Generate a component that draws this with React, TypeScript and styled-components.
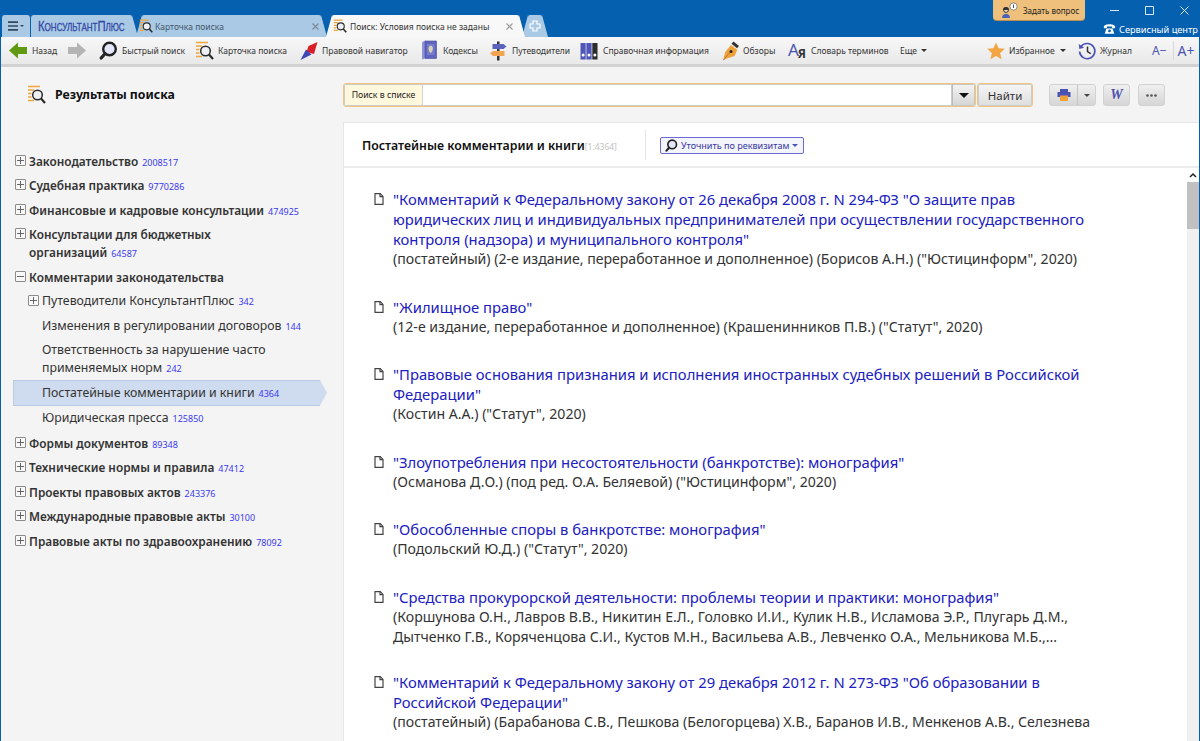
import React from "react";
import styled, { createGlobalStyle } from "styled-components";

const Global = createGlobalStyle`
  html, body { margin: 0; padding: 0; background: #0560b0; overflow: hidden; }
  #root { width: 1200px; height: 741px; }
  * { box-sizing: border-box; }
`;

const UI = `"Noto Sans", "Open Sans", sans-serif`;

const Page = styled.div`
  width: 1200px; height: 741px; display: flex; flex-direction: column;
  background: #0560b0; font-family: ${UI}; overflow: hidden;
  padding: 0 1px;
`;
const TitleBar = styled.div`
  height: 37px; display: flex; flex: none;
`;
const Tabs = styled.div`
  display: flex; align-items: flex-end; padding-left: 1px;
`;
const TabShape = styled.div<{ $w: number; $active?: boolean; $ml?: number; $plain?: boolean; $noLeft?: boolean }>`
  width: ${p => p.$w}px; margin-left: ${p => p.$ml ?? 0}px; height: 22px; flex: none; position: relative;
  display: flex; align-items: center; z-index: ${p => p.$active ? 2 : 1};
  background: ${p => p.$active ? "#f8f8f8" : "#a9c9e4"};
  border-radius: ${p => p.$plain ? "3px 3px 0 0" : p.$noLeft ? "3px 2px 0 0" : "2px 2px 0 0"};
  font-size: 8.5px;
  &::before, &::after {
    content: ""; position: absolute; top: 0; bottom: 0; width: 6px; background: inherit;
    display: ${p => p.$plain ? "none" : "block"};
  }
  &::before { right: 100%; clip-path: polygon(100% 0, 100% 100%, 0 100%); ${p => p.$noLeft ? "display: none;" : ""} }
  &::after { left: 100%; clip-path: polygon(0 0, 100% 100%, 0 100%); }
`;
const MenuInner = styled.div`
  flex: 1; display: flex; align-items: center; justify-content: center; gap: 1px;
`;
const LogoText = styled.span`
  display: inline-block; margin-left: 7px; transform: scaleX(0.73); transform-origin: left center;
  font-family: "Liberation Sans", sans-serif; font-size: 15.5px; font-variant: small-caps; color: #3448a6;
  -webkit-text-stroke: 0.3px #3448a6; white-space: nowrap; line-height: 1;
`;
const TabIconWrap = styled.span<{ $ml: number }>`
  display: flex; margin-left: ${p => p.$ml}px; position: relative; z-index: 1; flex: none;
`;
const TabLabel = styled.span<{ $active?: boolean; $pl: number }>`
  flex: 1; white-space: nowrap; color: ${p => p.$active ? "#333" : "#44586c"};
  padding-left: ${p => p.$pl}px;
`;
const TabClose = styled.span<{ $mr: number }>`
  display: flex; margin-right: ${p => p.$mr}px; flex: none;
`;
const PlusGlyph = styled.span`
  flex: 1; display: flex; justify-content: center; position: relative; z-index: 1;
`;
const RightControls = styled.div`
  margin-left: auto; display: flex; align-items: flex-start;
`;
const AskBtn = styled.div`
  width: 92px; height: 21px; flex: none;
  background: #eec07c; border-radius: 0 0 4px 4px; border-bottom: 1px solid #b98f50;
  display: flex; align-items: center; gap: 5px; padding-left: 8px;
  font-size: 8px; color: #222; white-space: nowrap;
`;
const WinColumn = styled.div`
  width: 114px; flex: none; display: flex; flex-direction: column; height: 37px;
`;
const WinButtons = styled.div`
  height: 21px; display: flex; gap: 26px; align-items: center; padding-left: 25px;
`;
const ServiceCenter = styled.div`
  display: flex; gap: 3px; align-items: center; padding-left: 18px;
  color: #fff; font-size: 9.2px; white-space: nowrap; height: 16px;
`;

const Toolbar = styled.div`
  height: 30px; flex: none; display: flex; align-items: center; padding-left: 8px;
  background: linear-gradient(#f7f7f7, #e9e9e9); border-bottom: 3px solid #d2d2d2;
`;
const ToolItem = styled.div<{ $w: number; $gap?: number }>`
  display: flex; align-items: center; gap: ${p => p.$gap ?? 4}px; width: ${p => p.$w}px;
  font-size: 8.5px; color: #333; white-space: nowrap; flex: none;
`;
const Caret = styled.span<{ $c?: string; $s?: number; $ml?: number }>`
  display: inline-block; width: 0; height: 0; margin-left: ${p => p.$ml ?? 4}px; flex: none;
  border-left: ${p => p.$s ?? 3.5}px solid transparent; border-right: ${p => p.$s ?? 3.5}px solid transparent;
  border-top: ${p => p.$s ?? 3.5}px solid ${p => p.$c ?? "#333"};
`;
const AyaIcon = styled.span`
  display: flex; align-items: flex-end; width: 20px; height: 20px; flex: none; line-height: 1; position: relative;
`;
const AyaBig = styled.span`
  font-size: 17px; color: #4a55b0; margin-bottom: 3px;
`;
const AyaSmall = styled.span`
  font-size: 12px; font-weight: 700; color: #333; margin-left: -1px; margin-bottom: 1px;
`;
const FontBtn = styled.span<{ $size: number; $ml: number }>`
  font-size: ${p => p.$size}px; color: #4a55b0; margin-left: ${p => p.$ml}px; line-height: 1; flex: none;
`;
const FontDivider = styled.span`
  width: 1px; height: 19px; background: #d8d8d8; margin-left: 6px; flex: none;
`;

const Main = styled.div`
  flex: 1; display: flex; min-height: 0; background: #f4f4f4;
`;
const Sidebar = styled.aside`
  width: 342px; flex: none; display: flex; flex-direction: column; padding-left: 12px;
`;
const SideHead = styled.div`
  height: 54px; display: flex; align-items: center; padding-left: 14px; gap: 9px; flex: none;
`;
const SideTitle = styled.div`
  font-size: 12.3px; font-weight: 700; color: #111;
`;
const Tree = styled.div`
  padding-top: 27px; display: flex; flex-direction: column;
`;
const TreeRow = styled.div<{ $level?: boolean; $selected?: boolean }>`
  position: relative; display: flex; align-items: flex-start; min-height: 24.5px;
  padding: 3.5px 0 3px ${p => p.$level ? 29 : 2}px;
  ${p => p.$selected ? `
    width: 307px; background: #cfdbee; border: 1px solid #bccbe4; border-right: none; padding-top: 2.5px; padding-left: 28px;
    &::after { content: ""; position: absolute; right: -7px; top: -1px; bottom: -1px; width: 7px;
      background: #cfdbee; clip-path: polygon(0 0, 100% 50%, 0 100%); }
  ` : ""}
`;
const Expander = styled.span<{ $level?: boolean }>`
  width: 11px; height: 11px; flex: none; border: 1px solid #8c8c8c; border-radius: 1px;
  margin: 3px 3px 0 ${p => p.$level ? -14 : 0}px; position: relative; background: #f8f8f8;
`;
const ExpanderH = styled.span`
  position: absolute; left: 1px; right: 1px; top: 4px; height: 1px; background: #666;
`;
const ExpanderV = styled.span`
  position: absolute; top: 1px; bottom: 1px; left: 4px; width: 1px; background: #666;
`;
const TreeText = styled.div<{ $bold?: boolean }>`
  font-size: ${p => p.$bold ? 11.85 : 12.3}px; line-height: 18px; font-weight: ${p => p.$bold ? 600 : 400}; color: #333;
  white-space: pre-line;
`;
const Count = styled.span`
  font-size: 9px; font-weight: 400; color: #3a3af0; margin-left: 4px; white-space: nowrap; line-height: 1;
`;

const Right = styled.div`
  flex: 1; min-width: 0; display: flex; flex-direction: column;
`;
const SearchRow = styled.div`
  height: 55px; flex: none; display: flex; align-items: center; padding-top: 1px;
`;
const SearchBox = styled.div`
  width: 633px; height: 24px; display: flex; border: 1px solid #f2c57d; border-radius: 3px; background: #fff; overflow: hidden; flex: none;
`;
const SearchLabel = styled.div`
  width: 79px; flex: none; background: #fff8dc; border: 1px solid #ccc; border-right-color: #d4d4d4; font-size: 8.7px; color: #222;
  display: flex; align-items: center; justify-content: center; white-space: nowrap;
`;
const SearchInput = styled.div`
  flex: 1; border: 1px solid #ccc; border-left: none; background: #fff;
`;
const Drop = styled.div`
  width: 23px; flex: none; background: linear-gradient(#f3f3f3,#d6d6d6); border: 1px solid #c6c6c6; border-left-color: #bbb;
  display: flex; align-items: center; justify-content: center;
`;
const FindBtn = styled.div`
  width: 56px; height: 24px; flex: none; margin-left: 1px; background: linear-gradient(#f6f6f6,#dedede); border: 1px solid #f2c57d; border-radius: 3px; box-shadow: inset 0 0 0 1px #ccc;
  font-size: 11.5px; color: #333; display: flex; align-items: center; justify-content: center;
`;
const ActionBtn = styled.div<{ $w: number; $ml: number }>`
  width: ${p => p.$w}px; margin-left: ${p => p.$ml}px; height: 22px; flex: none; display: flex; align-items: center; justify-content: center;
  background: linear-gradient(#efefef,#d6d6d6); border: 1px solid #d2d2d2; border-radius: 3px;
`;
const ActionSplit = styled.div<{ $w: number }>`
  width: ${p => p.$w}px; height: 100%; display: flex; align-items: center; justify-content: center;
  & + & { border-left: 1px solid #c4c4c4; }
`;
const WordW = styled.span`
  font-family: "Liberation Serif", serif; font-weight: 700; font-style: italic; font-size: 14px; color: #4b4fb0;
`;

const Panel = styled.div`
  flex: 1; min-height: 0; background: #fff; border-left: 1px solid #e6e6e6; border-top: 1px solid #e6e6e6; display: flex; flex-direction: column;
`;
const PanelHead = styled.div`
  height: 45px; flex: none; display: flex; align-items: center; border-bottom: 2px solid #ececec; padding: 1px 0 0 18px;
`;
const PanelTitle = styled.div`
  width: 283px; font-size: 12.3px; font-weight: 600; color: #111; white-space: nowrap; flex: none;
`;
const PanelCount = styled.span`
  font-size: 8.5px; font-weight: 400; color: #c2c2c2;
`;
const HeadDivider = styled.div`
  width: 1px; height: 30px; background: #e4e4e4; flex: none;
`;
const RefineBtn = styled.div`
  margin-left: 14px; height: 17px; width: 144px; flex: none; display: flex; align-items: center; gap: 3px; padding-left: 4px;
  border: 1px solid #6a6ad2; border-radius: 2px; background: #f4f4fb; color: #3636a0; font-size: 9.05px; white-space: nowrap;
`;
const ListWrap = styled.div`
  flex: 1; min-height: 0; display: flex;
`;
const List = styled.div`
  flex: 1; min-width: 0; padding: 21px 0 0 30px; display: flex; flex-direction: column; gap: 27.5px; overflow: hidden;
`;
const Doc = styled.div`
  display: flex; gap: 9px;
  &:last-child { margin-top: -2px; }
`;
const DocIconWrap = styled.span`
  flex: none; padding-top: 4px; display: flex;
`;
const DocBody = styled.div`
  line-height: 20px; white-space: nowrap;
`;
const DocTitle = styled.div`
  color: #2020c0; font-size: 14.8px;
`;
const DocMeta = styled.div`
  color: #333; font-size: 14.1px;
`;
const ScrollTrack = styled.div`
  width: 12px; flex: none; background: #f0f0f0; display: flex; flex-direction: column;
`;
const ScrollUp = styled.div`
  height: 14px; flex: none; display: flex; align-items: center; justify-content: center; background: #fff;
`;
const ScrollThumb = styled.div`
  height: 47px; background: #c0c0c0; flex: none;
`;

const MagnifierIcon = ({ size = 19 }: { size?: number }) => (
  <svg width={size} height={size} viewBox="0 0 19 19">
    <circle cx="10.500" cy="8" r="6.300" fill="#e4e6fb" stroke="#222" strokeWidth="2.400" />
    <path d="M6 12.800 L2.200 17" stroke="#222" strokeWidth="3.200" strokeLinecap="round" />
  </svg>
);
const CardIcon = ({ size = 19 }: { size?: number }) => (
  <svg width={size} height={size} viewBox="0 0 19 19">
    <path d="M1 1.500h12M1 5h6M1 8.500h3.500M1 12h3.500M1 15.500h6" stroke="#f0a63c" strokeWidth="1.700" />
    <circle cx="10.500" cy="10" r="4.800" fill="#eef0f6" stroke="#2b2b2b" strokeWidth="1.500" />
    <path d="M14 13.500l4 4.500" stroke="#2b2b2b" strokeWidth="2.200" />
  </svg>
);
const NavIcon = () => (
  <svg width="18" height="20" viewBox="0 0 18 20">
    <path d="M17.500 1 L8.500 5 L6.500 11 L14 13 Z" fill="#d81f26" />
    <path d="M6 8.500 L0.500 19 L11.500 13.500 Z" fill="#3c48b5" />
  </svg>
);
const CodexIcon = () => (
  <svg width="16" height="21" viewBox="0 0 16 21">
    <path d="M1 2l4-1.500V18l-4 1.500z" fill="#8f93d6" />
    <rect x="4" y="1" width="11.500" height="17.500" fill="#5f63bd" stroke="#474b9f" strokeWidth=".6" />
    <rect x="6" y="4" width="7.500" height="11" fill="#777bcc" />
    <path d="M9.700 5.500c2 .5 2.500 2.800 1.800 5-.5 1.300-1 1.700-1.800 2.500-.8-.8-1.400-1.200-1.800-2.500-.7-2.200-.2-4.500 1.800-5z" fill="#d8d2b4" />
  </svg>
);
const GuideIcon = () => (
  <svg width="17" height="20" viewBox="0 0 17 20">
    <rect x="7" y="0.500" width="2.500" height="19" fill="#333" />
    <path d="M2.500 3h11l3 2.500-3 2.500h-11z" fill="#5a62bd" />
    <path d="M14.500 10H3l-3 2.500L3 15h11.500z" fill="#f3a450" />
  </svg>
);
const BindersIcon = () => (
  <svg width="18" height="20" viewBox="0 0 18 20">
    <rect x="0.500" y="2" width="5.200" height="16.500" fill="#4f56b8" />
    <rect x="6.400" y="2" width="5.200" height="16.500" fill="#4f56b8" />
    <rect x="12.300" y="2" width="5.200" height="16.500" fill="#2d2d2d" />
    <circle cx="3.100" cy="14" r="1.500" fill="#fff" /><circle cx="9" cy="14" r="1.500" fill="#fff" /><circle cx="14.900" cy="14" r="1.500" fill="#fff" />
  </svg>
);
const PenIcon = () => (
  <svg width="18" height="20" viewBox="0 0 18 20">
    <path d="M11.500 .500l5.500 4.500-2 2.300-5.500-4.500z" fill="#333" />
    <path d="M9 4l6.300 4.800-2.700 6.200-8 2.500L1 19.500 3.200 11z" fill="#f0a23a" />
    <circle cx="9" cy="10.500" r="1.500" fill="#222" />
    <path d="M1.500 19l6.500-7.800" stroke="#a06b20" strokeWidth=".7" />
  </svg>
);
const StarIcon = () => (
  <svg width="18" height="18" viewBox="0 0 24 24"><path d="M12 .5l3.500 7.800 8.300.8-6.300 5.600 1.900 8.300L12 18.700 4.600 23l1.900-8.300L.2 9.100l8.300-.8z" fill="#f3a544" /></svg>
);
const HistoryIcon = () => (
  <svg width="18" height="18" viewBox="0 0 18 18">
    <path d="M3.300 4.300A7.600 7.600 0 1 1 1.600 9.500" fill="none" stroke="#4a52b6" strokeWidth="1.700" />
    <path d="M.8 2l.5 5 4.800-1.200z" fill="#4a52b6" />
    <path d="M9.500 4.500V9.700l3.200 2" fill="none" stroke="#333" strokeWidth="1.500" />
  </svg>
);
const ArrowIcon = ({ dir, color }: { dir: "l" | "r"; color: string }) => (
  <svg width="18" height="17" viewBox="0 0 18 17">
    <path d={dir === "l" ? "M0 8.500 L9 .5 V5 H18 V12 H9 V16.500 Z" : "M18 8.500 L9 .5 V5 H0 V12 H9 V16.500 Z"} fill={color} />
  </svg>
);
const HamburgerIcon = () => (
  <svg width="10" height="10" viewBox="0 0 10 10"><path d="M0 1.200h10M0 5h10M0 8.800h10" stroke="#34495e" strokeWidth="1.700" /></svg>
);
const PersonIcon = () => (
  <svg width="17" height="17" viewBox="0 0 17 17">
    <circle cx="5" cy="8" r="2.400" fill="#f6e3c4" stroke="#333" strokeWidth="1" />
    <path d="M2 8a3 3 0 0 1 6 0" fill="#333" />
    <path d="M1 16c0-3 2-4 3-4h2c1 0 3 1 3 4z" fill="#4a62b8" />
    <circle cx="12.500" cy="4.500" r="3.600" fill="#fff" stroke="#777" strokeWidth=".8" />
    <rect x="12" y="2.500" width="1" height="3.500" fill="#555" />
  </svg>
);
const PhoneIcon = () => (
  <svg width="13" height="12" viewBox="0 0 15 13">
    <path d="M1 4c0-4 13-4 13 0v1.500h-3.500V3.500h-6V5.500H1z" fill="#fff" />
    <path d="M4 6h7l2 6H2z" fill="#fff" />
    <circle cx="7.500" cy="8.700" r="1.600" fill="#0560b0" />
  </svg>
);
const PrintIcon = () => (
  <svg width="14" height="14" viewBox="0 0 14 14">
    <rect x="3" y="1" width="8" height="3" fill="#4a52b6" />
    <rect x="0.500" y="4" width="13" height="5" fill="#4a52b6" />
    <rect x="3" y="7.500" width="8" height="5.500" fill="#f0a23a" />
  </svg>
);
const DotsIcon = () => (
  <svg width="11" height="3" viewBox="0 0 11 3"><circle cx="1.500" cy="1.500" r="1.300" fill="#555" /><circle cx="5.500" cy="1.500" r="1.300" fill="#555" /><circle cx="9.500" cy="1.500" r="1.300" fill="#555" /></svg>
);
const DocIcon = () => (
  <svg width="10" height="12" viewBox="0 0 10 12">
    <path d="M1 .7h5.300L9 3.400v7.900H1z" fill="#fff" stroke="#444" strokeWidth="1.200" />
    <path d="M6 .7v3h3" fill="none" stroke="#444" strokeWidth="1.200" />
  </svg>
);
const PlusIcon = () => (
  <svg width="12" height="12" viewBox="0 0 12 12"><path d="M4 1h4v3h3v4H8v3H4V8H1V4h3z" fill="#a9c9e4" stroke="#fff" strokeWidth="1.200" /></svg>
);
const CloseIcon = ({ color }: { color: string }) => (
  <svg width="7" height="7" viewBox="0 0 7 7"><path d="M.5.500l6 6M6.500.500l-6 6" stroke={color} strokeWidth="1.200" /></svg>
);
const WinLine = ({ d }: { d: string }) => (
  <svg width="9" height="9" viewBox="0 0 9 9"><path d={d} fill="none" stroke="#dbe8f4" strokeWidth="1" /></svg>
);

const Tool = ({ w, gap, icon, label, caret }: { w: number; gap?: number; icon?: React.ReactNode; label?: string; caret?: boolean }) => (
  <ToolItem $w={w} $gap={gap}>{icon}{label && <span>{label}</span>}{caret && <Caret $ml={1} />}</ToolItem>
);

const Node = ({ label, count, level, open, leaf, bold, selected }: { label: string; count: string; level?: boolean; open?: boolean; leaf?: boolean; bold?: boolean; selected?: boolean }) => (
  <TreeRow $level={level} $selected={selected}>
    {!leaf && (
      <Expander $level={level}>
        <ExpanderH />{!open && <ExpanderV />}
      </Expander>
    )}
    <TreeText $bold={bold}>{label}{count && <Count>{count}</Count>}</TreeText>
  </TreeRow>
);

const docs: { title: string[]; meta: string[] }[] = [
  { title: ['"Комментарий к Федеральному закону от 26 декабря 2008 г. N 294-ФЗ "О защите прав', "юридических лиц и индивидуальных предпринимателей при осуществлении государственного", 'контроля (надзора) и муниципального контроля"'], meta: ['(постатейный) (2-е издание, переработанное и дополненное) (Борисов А.Н.) ("Юстицинформ", 2020)'] },
  { title: ['"Жилищное право"'], meta: ['(12-е издание, переработанное и дополненное) (Крашенинников П.В.) ("Статут", 2020)'] },
  { title: ['"Правовые основания признания и исполнения иностранных судебных решений в Российской', 'Федерации"'], meta: ['(Костин А.А.) ("Статут", 2020)'] },
  { title: ['"Злоупотребления при несостоятельности (банкротстве): монография"'], meta: ['(Османова Д.О.) (под ред. О.А. Беляевой) ("Юстицинформ", 2020)'] },
  { title: ['"Обособленные споры в банкротстве: монография"'], meta: ['(Подольский Ю.Д.) ("Статут", 2020)'] },
  { title: ['"Средства прокурорской деятельности: проблемы теории и практики: монография"'], meta: ["(Коршунова О.Н., Лавров В.В., Никитин Е.Л., Головко И.И., Кулик Н.В., Исламова Э.Р., Плугарь Д.М.,", "Дытченко Г.В., Коряченцова С.И., Кустов М.Н., Васильева А.В., Левченко О.А., Мельникова М.Б.,..."] },
  { title: ['"Комментарий к Федеральному закону от 29 декабря 2012 г. N 273-ФЗ "Об образовании в', 'Российской Федерации"'], meta: ["(постатейный) (Барабанова С.В., Пешкова (Белогорцева) Х.В., Баранов И.В., Менкенов А.В., Селезнева"] },
];

export default function App() {
  return (
    <Page>
      <Global />
      <TitleBar>
        <Tabs>
          <TabShape $w={28} $plain><MenuInner><HamburgerIcon /><Caret $c="#34495e" $s={2} $ml={1} /></MenuInner></TabShape>
          <TabShape $w={101} $ml={1} $noLeft><LogoText>КонсультантПлюс</LogoText></TabShape>
          <TabShape $w={179} $ml={10}>
            <TabIconWrap $ml={-3}><CardIcon size={14} /></TabIconWrap>
            <TabLabel $pl={2}>Карточка поиска</TabLabel>
            <TabClose $mr={2}><CloseIcon color="#7b8a99" /></TabClose>
          </TabShape>
          <TabShape $w={187} $ml={11} $active>
            <TabIconWrap $ml={1}><CardIcon size={14} /></TabIconWrap>
            <TabLabel $active $pl={3}>Поиск: Условия поиска не заданы</TabLabel>
            <TabClose $mr={6}><CloseIcon color="#9a9a9a" /></TabClose>
          </TabShape>
          <TabShape $w={14} $ml={9}><PlusGlyph><PlusIcon /></PlusGlyph></TabShape>
        </Tabs>
        <RightControls>
          <AskBtn><PersonIcon />Задать вопрос</AskBtn>
          <WinColumn>
            <WinButtons>
              <WinLine d="M0 4.500h9" />
              <WinLine d="M.5.500h8v8h-8z" />
              <WinLine d="M.5.500l8 8M8.500.500l-8 8" />
            </WinButtons>
            <ServiceCenter><PhoneIcon />Сервисный центр</ServiceCenter>
          </WinColumn>
        </RightControls>
      </TitleBar>
      <Toolbar>
        <Tool w={59} gap={5} icon={<ArrowIcon dir="l" color="#5f9a12" />} label="Назад" />
        <Tool w={31} icon={<ArrowIcon dir="r" color="#b4b4b4" />} />
        <Tool w={96} gap={4} icon={<MagnifierIcon />} label="Быстрый поиск" />
        <Tool w={105} gap={4} icon={<CardIcon />} label="Карточка поиска" />
        <Tool w={121} gap={4} icon={<NavIcon />} label="Правовой навигатор" />
        <Tool w={69} gap={6} icon={<CodexIcon />} label="Кодексы" />
        <Tool w={90} gap={5} icon={<GuideIcon />} label="Путеводители" />
        <Tool w={142} gap={5} icon={<BindersIcon />} label="Справочная информация" />
        <Tool w={66} gap={3} icon={<PenIcon />} label="Обзоры" />
        <Tool w={112} gap={3} icon={<AyaIcon><AyaBig>А</AyaBig><AyaSmall>Я</AyaSmall></AyaIcon>} label="Словарь терминов" />
        <Tool w={87} gap={3} label="Еще" caret />
        <Tool w={91} gap={4} icon={<StarIcon />} label="Избранное" caret />
        <Tool w={74} gap={4} icon={<HistoryIcon />} label="Журнал" />
        <FontBtn $size={12} $ml={0}>A−</FontBtn>
        <FontDivider />
        <FontBtn $size={14} $ml={4}>A+</FontBtn>
      </Toolbar>
      <Main>
        <Sidebar>
          <SideHead><CardIcon size={19} /><SideTitle>Результаты поиска</SideTitle></SideHead>
          <Tree>
            <Node bold label="Законодательство" count="2008517" />
            <Node bold label="Судебная практика" count="9770286" />
            <Node bold label="Финансовые и кадровые консультации" count="474925" />
            <Node bold label={"Консультации для бюджетных\nорганизаций"} count="64587" />
            <Node bold open label="Комментарии законодательства" count="" />
            <Node level label="Путеводители КонсультантПлюс" count="342" />
            <Node level leaf label="Изменения в регулировании договоров" count="144" />
            <Node level leaf label={"Ответственность за нарушение часто\nприменяемых норм"} count="242" />
            <Node level leaf selected label="Постатейные комментарии и книги" count="4364" />
            <Node level leaf label="Юридическая пресса" count="125850" />
            <Node bold label="Формы документов" count="89348" />
            <Node bold label="Технические нормы и правила" count="47412" />
            <Node bold label="Проекты правовых актов" count="243376" />
            <Node bold label="Международные правовые акты" count="30100" />
            <Node bold label="Правовые акты по здравоохранению" count="78092" />
          </Tree>
        </Sidebar>
        <Right>
          <SearchRow>
            <SearchBox>
              <SearchLabel>Поиск в списке</SearchLabel>
              <SearchInput />
              <Drop><Caret $c="#111" $s={5} $ml={0} /></Drop>
            </SearchBox>
            <FindBtn>Найти</FindBtn>
            <ActionBtn $w={47} $ml={16}>
              <ActionSplit $w={27}><PrintIcon /></ActionSplit>
              <ActionSplit $w={18}><Caret $c="#444" $s={3} $ml={0} /></ActionSplit>
            </ActionBtn>
            <ActionBtn $w={27} $ml={7}><WordW>W</WordW></ActionBtn>
            <ActionBtn $w={27} $ml={8}><DotsIcon /></ActionBtn>
          </SearchRow>
          <Panel>
            <PanelHead>
              <PanelTitle>Постатейные комментарии и книги<PanelCount>[1:4364]</PanelCount></PanelTitle>
              <HeadDivider />
              <RefineBtn><MagnifierIcon size={13} />Уточнить по реквизитам<Caret $c="#4a55b0" $s={3} $ml={0} /></RefineBtn>
            </PanelHead>
            <ListWrap>
              <List>
                {docs.map((d, i) => (
                  <Doc key={i}>
                    <DocIconWrap><DocIcon /></DocIconWrap>
                    <DocBody>
                      {d.title.map((t, j) => <DocTitle key={j}>{t}</DocTitle>)}
                      {d.meta.map((t, j) => <DocMeta key={j}>{t}</DocMeta>)}
                    </DocBody>
                  </Doc>
                ))}
              </List>
              <ScrollTrack>
                <ScrollUp><svg width="8" height="6" viewBox="0 0 8 6"><path d="M1 5l3-3 3 3" fill="none" stroke="#222" strokeWidth="1.500" /></svg></ScrollUp>
                <ScrollThumb />
              </ScrollTrack>
            </ListWrap>
          </Panel>
        </Right>
      </Main>
    </Page>
  );
}
